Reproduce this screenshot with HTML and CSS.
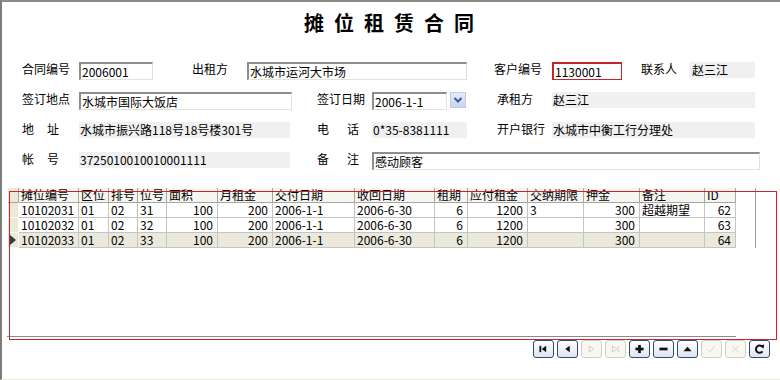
FILE: index.html
```html
<!DOCTYPE html>
<html lang="zh-CN">
<head>
    <meta charset="UTF-8">
    <title>摊位租赁合同</title>
    <link rel="stylesheet" href="styles.css">
</head>
<body>

    <div class="window">
        <h1 class="title">摊位租赁合同</h1>

        <!-- Contract header fields -->
        <div class="form">
            <div class="row">
                <span class="label">合同编号</span>
                <div class="input w-74">2006001</div>
                <span class="label lessor">出租方</span>
                <div class="input w-220">水城市运河大市场</div>
                <span class="label client">客户编号</span>
                <div class="input w-70 focused">1130001</div>
                <span class="label contact">联系人</span>
                <div class="readonly contact-box">赵三江</div>
            </div>

            <div class="row">
                <span class="label">签订地点</span>
                <div class="input w-213">水城市国际大饭店</div>
                <span class="label mid">签订日期</span>
                <div class="input w-75">2006-1-1</div>
                <div class="drop">
                    <svg width="14" height="14" viewBox="0 0 14 14"><path d="M3.5 5 L7 8.5 L10.5 5" fill="none" stroke="#3d5a95" stroke-width="2"/></svg>
                </div>
                <span class="label right-col tenant">承租方</span>
                <div class="readonly w-203">赵三江</div>
            </div>

            <div class="row short">
                <span class="label split"><span>地</span><span>址</span></span>
                <div class="readonly w-211">水城市振兴路118号18号楼301号</div>
                <span class="label mid split wide"><span>电</span><span>话</span></span>
                <div class="readonly w-95">0*35-8381111</div>
                <span class="label right-col">开户银行</span>
                <div class="readonly w-203">水城市中衡工行分理处</div>
            </div>

            <div class="row">
                <span class="label split"><span>帐</span><span>号</span></span>
                <div class="readonly w-211">3725010010010001111</div>
                <span class="label mid split wide"><span>备</span><span>注</span></span>
                <div class="input w-388">感动顾客</div>
            </div>
        </div>

        <!-- Stall grid -->
        <div class="grid-area">
            <div class="grid-row head">
                <div class="ind"></div>
                <div>摊位编号</div><div>区位</div><div>排号</div><div>位号</div><div>面积</div>
                <div>月租金</div><div>交付日期</div><div>收回日期</div><div>租期</div><div>应付租金</div>
                <div>交纳期限</div><div>押金</div><div>备注</div><div>ID</div>
                <div class="filler"></div>
            </div>
            <div class="grid-row">
                <div class="ind"></div>
                <div>10102031</div><div>01</div><div>02</div><div>31</div><div class="num">100</div>
                <div class="num">200</div><div>2006-1-1</div><div>2006-6-30</div><div class="num">6</div><div class="num">1200</div>
                <div>3</div><div class="num">300</div><div>超越期望</div><div class="num">62</div>
                <div class="filler"></div>
            </div>
            <div class="grid-row">
                <div class="ind"></div>
                <div>10102032</div><div>01</div><div>02</div><div>32</div><div class="num">100</div>
                <div class="num">200</div><div>2006-1-1</div><div>2006-6-30</div><div class="num">6</div><div class="num">1200</div>
                <div></div><div class="num">300</div><div></div><div class="num">63</div>
                <div class="filler"></div>
            </div>
            <div class="grid-row current">
                <div class="ind"><span class="arrow"></span></div>
                <div>10102033</div><div>01</div><div>02</div><div>33</div><div class="num">100</div>
                <div class="num">200</div><div>2006-1-1</div><div>2006-6-30</div><div class="num">6</div><div class="num">1200</div>
                <div></div><div class="num">300</div><div></div><div class="num">64</div>
                <div class="filler"></div>
            </div>
        </div>
        <div class="grid-rule"></div>

        <!-- Navigator -->
        <div class="nav">
            <button class="nav-btn"><svg viewBox="0 0 21 18"><rect x="6" y="5.5" width="2" height="7" fill="#111"/><polygon points="8.5,9 13.5,5.5 13.5,12.5" fill="#111"/></svg></button>
            <button class="nav-btn"><svg viewBox="0 0 21 18"><polygon points="8,9 13,5.5 13,12.5" fill="#111"/></svg></button>
            <button class="nav-btn off"><svg viewBox="0 0 21 18"><polygon points="8,5.5 13,9 8,12.5" fill="none" stroke="#cfcbbb"/></svg></button>
            <button class="nav-btn off"><svg viewBox="0 0 21 18"><polygon points="7,5.5 12,9 7,12.5" fill="none" stroke="#cfcbbb"/><line x1="13.5" y1="5.5" x2="13.5" y2="12.5" stroke="#cfcbbb"/></svg></button>
            <button class="nav-btn"><svg viewBox="0 0 21 18"><rect x="6" y="7.5" width="9" height="3" fill="#111"/><rect x="9" y="4.5" width="3" height="9" fill="#111"/></svg></button>
            <button class="nav-btn"><svg viewBox="0 0 21 18"><rect x="6" y="7.5" width="9" height="3" fill="#111"/></svg></button>
            <button class="nav-btn"><svg viewBox="0 0 21 18"><polygon points="6,11.5 10.5,6.5 15,11.5" fill="#111"/></svg></button>
            <button class="nav-btn off"><svg viewBox="0 0 21 18"><polyline points="6,10 8.5,12 14.5,5.5" fill="none" stroke="#d6d3c4"/></svg></button>
            <button class="nav-btn off"><svg viewBox="0 0 21 18"><path d="M7 5.5 L14 12.5 M14 5.5 L7 12.5" fill="none" stroke="#d6d3c4"/></svg></button>
            <button class="nav-btn"><svg viewBox="0 0 21 18"><path d="M13.6 6.6 A4 4 0 1 0 13.8 11.6" fill="none" stroke="#111" stroke-width="2.2"/><polygon points="11,5.2 15.6,4 15,8.6" fill="#111"/></svg></button>
        </div>

        <!-- Highlight frame around the grid -->
        <div class="frame"></div>
    </div>

</body>
</html>
```

FILE: styles.css
```css
/* Global */
body {
    margin: 0;
    font-family: "Noto Sans CJK SC", "Noto Sans CJK JP", sans-serif;
    font-size: 12px;
    color: #000;
    background-color: #fff;
}

.window {
    position: relative;
    width: 780px;
    height: 380px;
    box-sizing: border-box;
    border-left: 2px solid #7c7c78;
    border-top: 2px solid #8a8a86;
    border-bottom: 1px solid #ece9d8;
    background-color: #fff;
    overflow: hidden;
}

.title {
    margin: 6px 0 0;
    padding-left: 6px;
    height: 30px;
    line-height: 30px;
    font-size: 20px;
    font-weight: 700;
    letter-spacing: 10px;
    text-align: center;
}

/* Form */
.form {
    padding-left: 20px;
    margin-top: 24px;
}

.row {
    display: flex;
    align-items: flex-start;
    height: 18px;
    margin-bottom: 12px;
}

.row.short {
    height: 16px;
    margin-bottom: 14px;
}

.label {
    width: 57px;
    line-height: 14px;
    white-space: nowrap;
    flex-shrink: 0;
}

.label.split {
    display: flex;
    gap: 13px;
}

.label.split.wide {
    gap: 18px;
}

.label.mid {
    width: 55px;
}

.label.lessor {
    width: 55px;
    margin-left: 39px;
}

.label.client {
    width: 58px;
    margin-left: 27px;
}

.label.contact {
    width: 48px;
    margin-left: 19px;
}

.row .w-213 + .label.mid { margin-left: 25px; }
.row .w-211 + .label.mid { margin-left: 27px; }

.label.right-col {
    width: 55px;
    margin-left: 30px;
}

.label.tenant {
    margin-left: 31px;
}

.input {
    height: 18px;
    box-sizing: border-box;
    padding-left: 1px;
    border-style: solid;
    border-width: 2px 1px 1px 2px;
    border-color: #8d8d8a #e4e2d6 #e4e2d6 #8d8d8a;
    line-height: 15px;
    white-space: nowrap;
    flex-shrink: 0;
}

.input.focused {
    border-color: #c2252b;
}

.readonly {
    height: 16px;
    box-sizing: border-box;
    padding-left: 1px;
    background-color: #f0f0f0;
    line-height: 15px;
    white-space: nowrap;
    flex-shrink: 0;
}

.contact-box {
    width: 66px;
    padding-left: 3px;
}

.drop {
    width: 16px;
    height: 16px;
    margin-left: 3px;
    box-sizing: border-box;
    border: 1px solid #c5cbd8;
    background: linear-gradient(#e4ebfb, #c9d5f2);
    display: flex;
    justify-content: center;
    align-items: center;
}

.drop + .label.right-col { margin-left: 31px; }

.w-74 { width: 74px; }
.w-220 { width: 220px; }
.w-70 { width: 70px; }
.w-213 { width: 213px; }
.w-75 { width: 75px; }
.w-203 { width: 203px; }
.w-211 { width: 211px; }
.w-95 { width: 95px; }
.w-388 { width: 388px; }

/* Grid */
.grid-area {
    margin: 18px 0 0 6px;
    height: 148px;
}

.grid-row {
    display: grid;
    grid-template-columns: 11px 60px 30px 29px 29px 51px 55px 82px 80px 33px 60px 56px 56px 65px 31px 20px;
    height: 15px;
}

.grid-row > div {
    box-sizing: border-box;
    height: 15px;
    padding: 0 2px;
    border-right: 1px solid #c4c4c4;
    border-bottom: 1px solid #c4c4c4;
    line-height: 14px;
    white-space: nowrap;
}

.grid-row.head > div {
    background-color: #f6f5f0;
    border-right-color: #a7a6a0;
    border-bottom-color: #a7a6a0;
}

.grid-row.current > div {
    background-color: #ebe9dc;
}

.grid-row > .num {
    text-align: right;
    padding-right: 4px;
}

.grid-row > .ind {
    padding: 0;
    background-color: #ece9d8;
    border-right-color: #fff;
    border-bottom-color: #fff;
    position: relative;
}

.grid-row.head > .ind {
    background-color: #ece9d8;
}

.arrow {
    position: absolute;
    left: 2px;
    top: 2px;
    width: 0;
    height: 0;
    border-top: 5px solid transparent;
    border-bottom: 5px solid transparent;
    border-left: 6px solid #3c3c3c;
}

.grid-row > .filler,
.grid-row.head > .filler,
.grid-row.current > .filler {
    background-color: transparent;
    border-bottom: none;
    border-right: 1px solid #9c9c9c;
}

.grid-rule {
    margin-left: 5px;
    width: 729px;
    height: 1px;
    background-color: #8a8a96;
}

/* Navigator */
.nav {
    display: flex;
    justify-content: flex-end;
    gap: 3px;
    margin-top: 3px;
    padding-right: 10px;
}

.nav-btn {
    width: 21px;
    height: 18px;
    padding: 0;
    box-sizing: border-box;
    border: 1px solid #2f4d72;
    border-radius: 3px;
    background: linear-gradient(#ffffff, #dfe5ee);
    display: flex;
    justify-content: center;
    align-items: center;
}

.nav-btn svg {
    width: 21px;
    height: 18px;
    display: block;
}

.nav-btn.off {
    border-color: #d3d0c0;
    background: #f8f7f2;
}

/* Red outline over the grid */
.frame {
    position: absolute;
    left: 7px;
    top: 189px;
    width: 768px;
    height: 149px;
    box-sizing: border-box;
    border: 1px solid #c8242a;
    pointer-events: none;
}
```
